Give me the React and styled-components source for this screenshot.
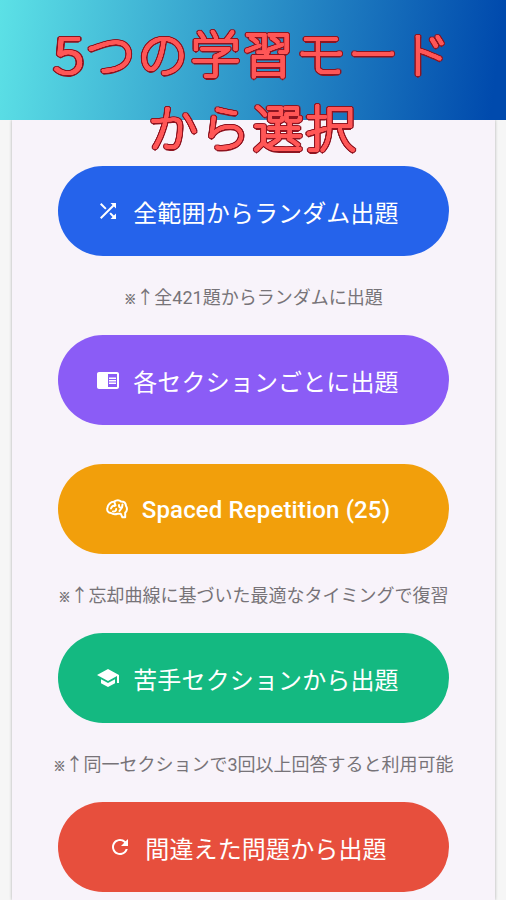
import React from "react";
import styled, { createGlobalStyle } from "styled-components";
import { MdShuffle, MdChromeReaderMode, MdSchool, MdRefresh } from "react-icons/md";

const GlobalStyle = createGlobalStyle`
  * { box-sizing: border-box; }
  body { margin: 0; background: #f6f6f6; font-family: Roboto, "Noto Sans CJK JP", sans-serif; }
`;

const Screen = styled.main`
  width: 506px;
  height: 900px;
  overflow: hidden;
  background: #f6f6f6;
`;

const Banner = styled.header`
  height: 120px;
  padding-top: 14px;
  background: linear-gradient(97deg, #5ce1e6 0%, #004aad 97%);
  position: relative;
`;

// Round pen: copies of the text placed on a circle thicken every stroke evenly.
const ring = (radius, color) =>
  Array.from({ length: 20 }, (_, i) => {
    const a = (i * Math.PI) / 10;
    return `${(radius * Math.cos(a)).toFixed(2)}px ${(radius * Math.sin(a)).toFixed(2)}px 0 ${color}`;
  }).join(", ");

const Title = styled.h1`
  margin: 0;
  text-align: center;
  font: 100 50px/74px "Noto Sans CJK JP", sans-serif;
  letter-spacing: 2.6px;
  text-indent: 3px;
  color: #ff5757;
  text-shadow: ${ring(1.2, "#ff5757")}, ${ring(2.5, "#8f1420")};
`;

const WideDigit = styled.span`
  display: inline-block;
  text-indent: 0;
  margin-right: 1px;
  transform: scaleX(1.16);
`;

const Sheet = styled.section`
  height: 780px;
  margin: 0 11px 0 12px;
  padding: 46px 0 0;
  display: flex;
  flex-direction: column;
  align-items: center;
  background: #f8f3fa;
  box-shadow: 0 0 3px rgba(0, 0, 0, 0.3);
`;

const ModeButton = styled.button`
  flex: none;
  width: 391px;
  height: 90px;
  margin-bottom: ${(p) => (p.$spaced ? "39px" : "0")};
  padding: ${(p) => (p.$latin ? "2px" : "5px")} 12px 0 0;
  border: 0;
  border-radius: 45px;
  display: flex;
  align-items: center;
  justify-content: center;
  gap: 13px;
  color: #fff;
  background: ${(p) => p.$color};
  font: ${(p) => (p.$latin ? 500 : 400)} 24px/36px Roboto, "Noto Sans CJK JP", sans-serif;
  letter-spacing: 0.14px;
  svg { flex: none; width: 24px; height: 24px; margin-top: ${(p) => (p.$latin ? "-2px" : "-5px")}; }
`;

const Note = styled.p`
  flex: none;
  height: 79px;
  margin: 0;
  padding-top: 4px;
  font-size: 18px;
  line-height: 75px;
  white-space: nowrap;
  color: #777378;
`;

const Mark = styled.span`
  font-size: 12px;
  -webkit-text-stroke: 0.5px currentColor;
`;

const BrainIcon = () => (
  <svg viewBox="0 0 24 24" fill="none" stroke="currentColor" strokeWidth="2" strokeLinecap="round" strokeLinejoin="round">
    <path d="M6 16C3 16 1.8 13.6 2.3 11 2.8 7.4 6 4.5 9 4.7 11.5 3 14.6 3.3 16.2 4.6 19 4.6 20.8 6.6 21 9c1.6 2 1 5.400-.8 6.600v4.700h-2.800l-1.600-3.500h-3.200C10.500 17.500 8 17.500 6 16z" />
    <path d="M6 11.500c.5-2 2-3 3.500-2.500M9.500 5.500l1 3M8 14.500c2 .3 3.200-.8 3.200-2.500M14 8c-.2 2 1 3 3 2.500M17.500 7.500l-.5 3-2.500 3.500" />
  </svg>
);

const modes = [
  { label: "全範囲からランダム出題", color: "#2563eb", Icon: MdShuffle, note: "↑全421題からランダムに出題" },
  { label: "各セクションごとに出題", color: "#8b5cf6", Icon: MdChromeReaderMode },
  { label: "Spaced Repetition (25)", color: "#f29f0b", Icon: BrainIcon, latin: true, note: "↑忘却曲線に基づいた最適なタイミングで復習" },
  { label: "苦手セクションから出題", color: "#14b981", Icon: MdSchool, note: "↑同一セクションで3回以上回答すると利用可能" },
  { label: "間違えた問題から出題", color: "#e74f3d", Icon: MdRefresh },
];

export default function App() {
  return (
    <Screen>
      <GlobalStyle />
      <Banner>
        <Title><WideDigit>5</WideDigit>つの学習モード<br />から選択</Title>
      </Banner>
      <Sheet>
        {modes.map(({ label, color, Icon, latin, note }) => (
          <React.Fragment key={label}>
            <ModeButton $color={color} $spaced={!note} $latin={latin}>
              <Icon />
              <span>{label}</span>
            </ModeButton>
            {note && <Note><Mark>※</Mark>{note}</Note>}
          </React.Fragment>
        ))}
      </Sheet>
    </Screen>
  );
}
